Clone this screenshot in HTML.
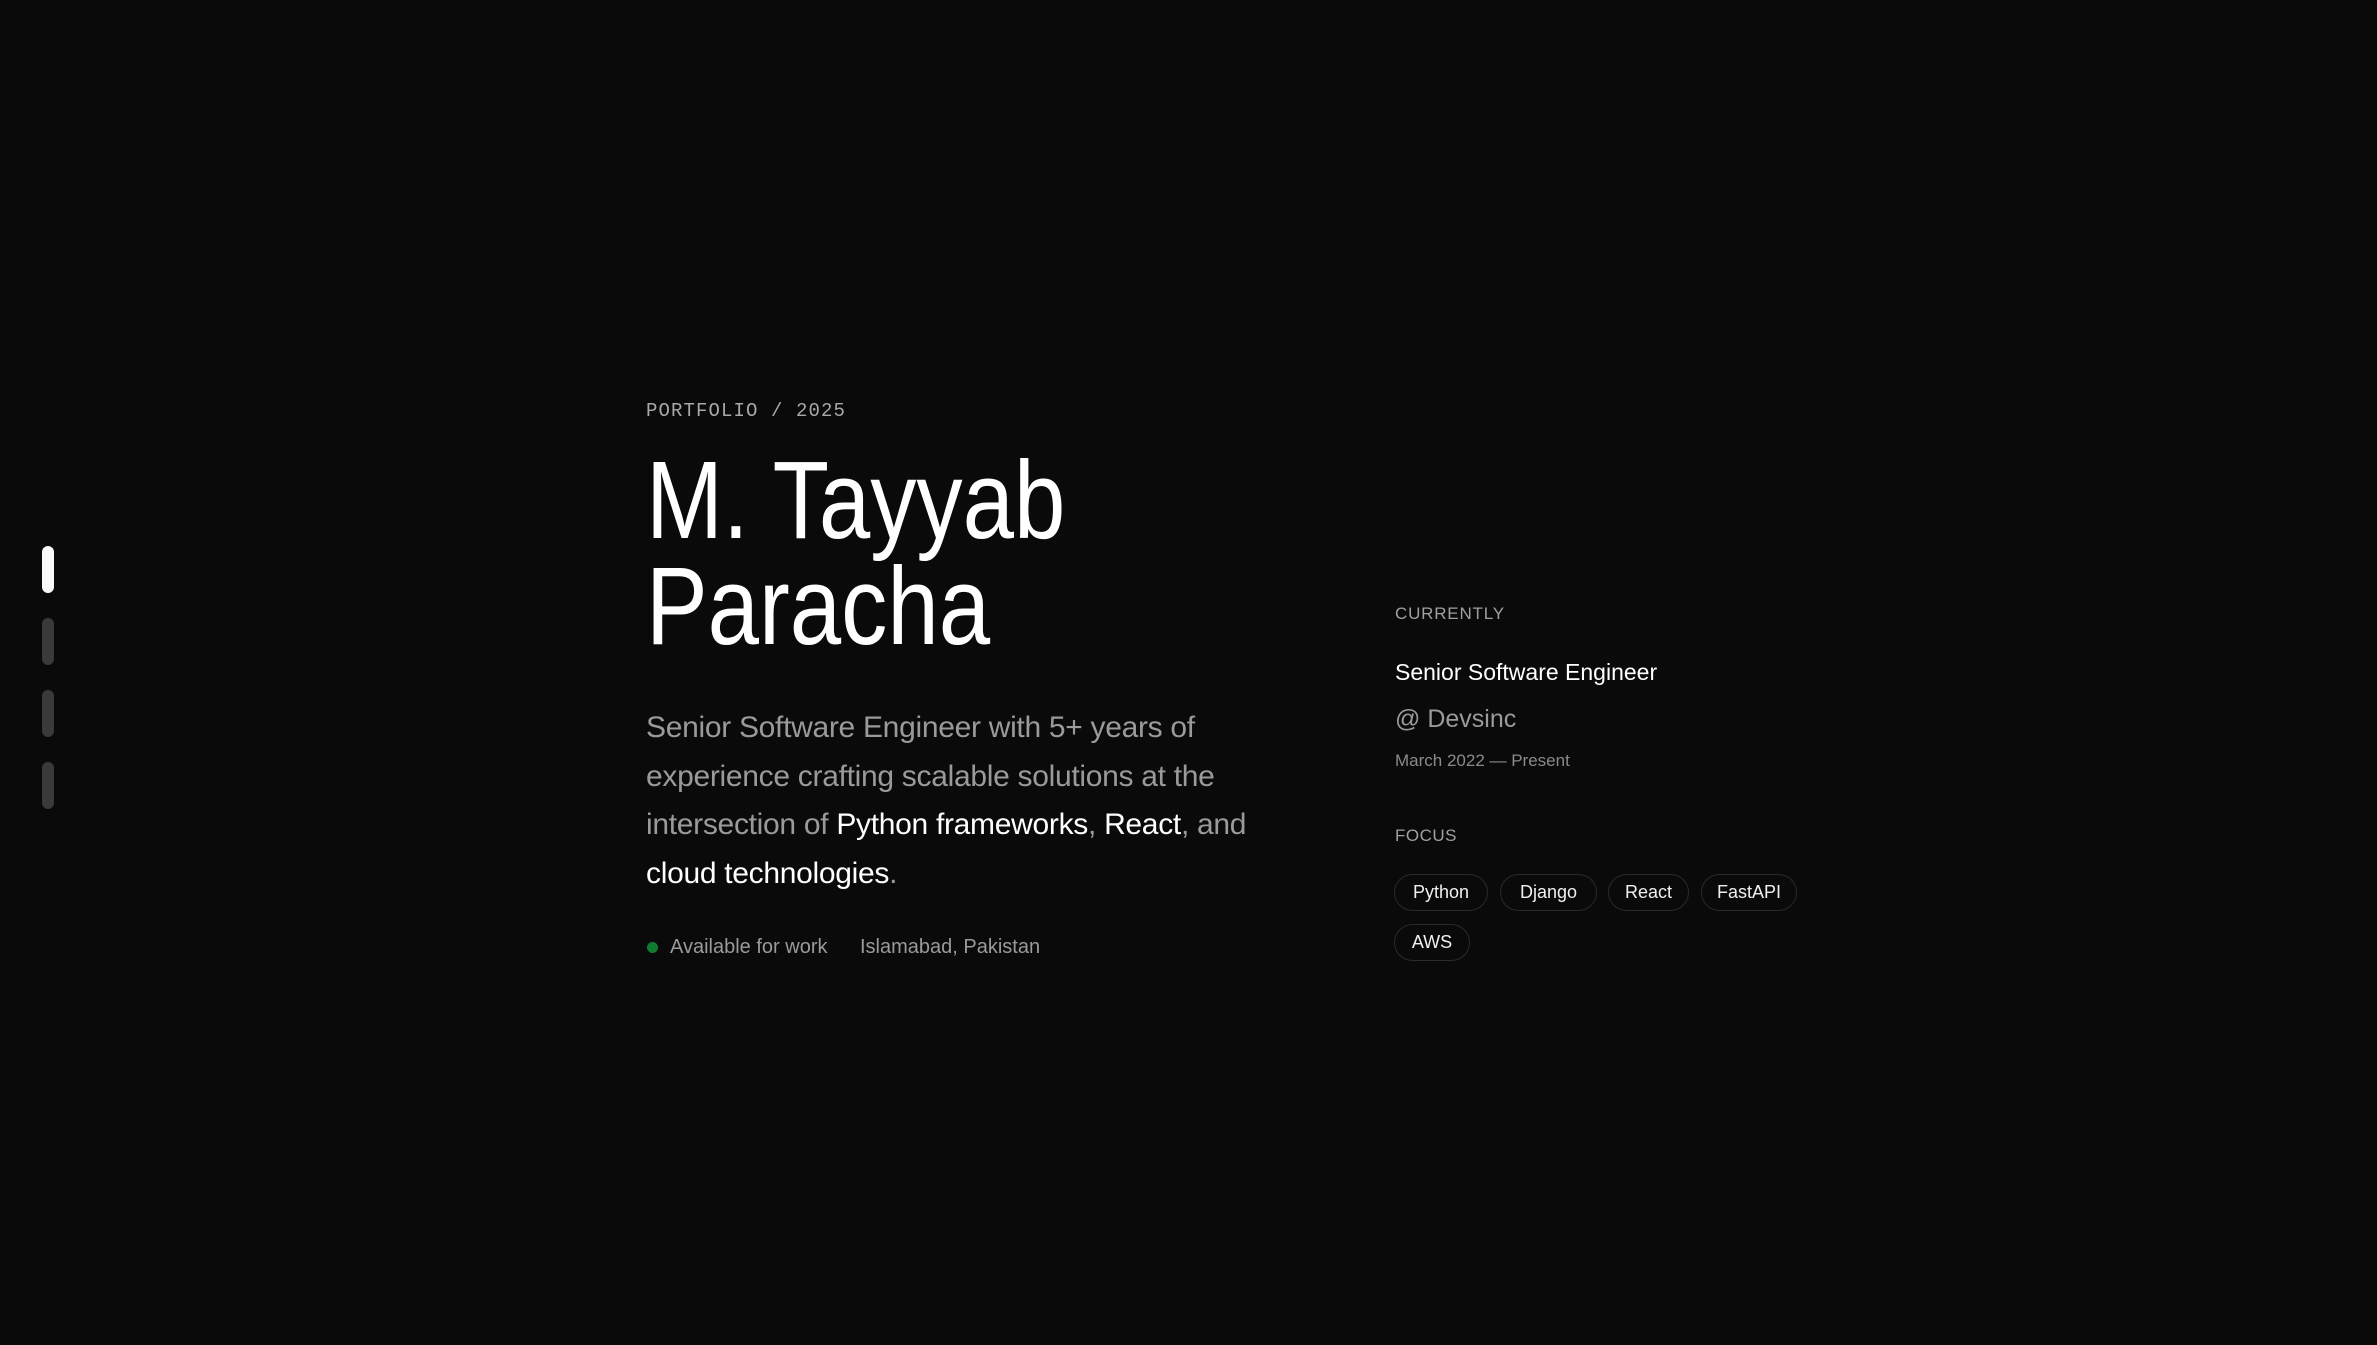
<!DOCTYPE html>
<html><head><meta charset="utf-8"><style>
html,body{margin:0;padding:0;background:#0a0a0a;width:2377px;height:1345px;overflow:hidden;position:relative;font-family:"Liberation Sans",sans-serif;}
.bar{position:absolute;left:42px;width:12px;height:47px;border-radius:6px;background:#3a3a3a}
.a{position:absolute;white-space:nowrap}
.mono{font-family:"Liberation Mono",monospace}
.h{left:646px;font-size:110px;color:#fff;line-height:1;transform:scaleX(0.84);transform-origin:0 0;font-weight:300}
.p{left:646px;font-size:30px;color:#9a9a9a;letter-spacing:-0.3px;line-height:1}
.p b{font-weight:normal;color:#fff}
.chip{position:absolute;height:35px;border:1px solid #2a2a2a;border-radius:19px;color:#f0f0f0;font-size:18px;line-height:35px;text-align:center;box-sizing:content-box}
</style></head><body>
<div class="bar" style="top:546px;background:#fafafa"></div>
<div class="bar" style="top:618px"></div>
<div class="bar" style="top:690px"></div>
<div class="bar" style="top:762px"></div>

<div class="a mono" style="left:646px;top:400px;font-size:19px;letter-spacing:1.1px;color:#a8a8a8">PORTFOLIO / 2025</div>
<div class="a h" style="top:446px">M. Tayyab</div>
<div class="a h" style="top:552px">Paracha</div>

<div class="a p" style="top:713px">Senior Software Engineer with 5+ years of</div>
<div class="a p" style="top:762px">experience crafting scalable solutions at the</div>
<div class="a p" style="top:810px">intersection of <b>Python frameworks</b>, <b>React</b>, and</div>
<div class="a p" style="top:859px"><b>cloud technologies</b>.</div>

<div class="a" style="left:647px;top:942px;width:11px;height:11px;border-radius:50%;background:#137a32"></div>
<div class="a" style="left:670px;top:936px;font-size:20px;color:#9a9a9a">Available for work</div>
<div class="a" style="left:860px;top:936px;font-size:20px;color:#9a9a9a">Islamabad, Pakistan</div>

<div class="a" style="left:1395px;top:604px;font-size:17px;color:#a0a0a0;letter-spacing:0.8px">CURRENTLY</div>
<div class="a" style="left:1395px;top:659px;font-size:23px;color:#fff">Senior Software Engineer</div>
<div class="a" style="left:1395px;top:705px;font-size:25px;color:#9a9a9a">@ Devsinc</div>
<div class="a" style="left:1395px;top:751px;font-size:17px;color:#8a8a8a">March 2022 — Present</div>
<div class="a" style="left:1395px;top:826px;font-size:17px;color:#a0a0a0;letter-spacing:0.5px">FOCUS</div>

<div class="chip" style="left:1394px;top:874px;width:92px">Python</div>
<div class="chip" style="left:1500px;top:874px;width:95px">Django</div>
<div class="chip" style="left:1608px;top:874px;width:79px">React</div>
<div class="chip" style="left:1701px;top:874px;width:94px">FastAPI</div>
<div class="chip" style="left:1394px;top:924px;width:74px">AWS</div>
</body></html>
